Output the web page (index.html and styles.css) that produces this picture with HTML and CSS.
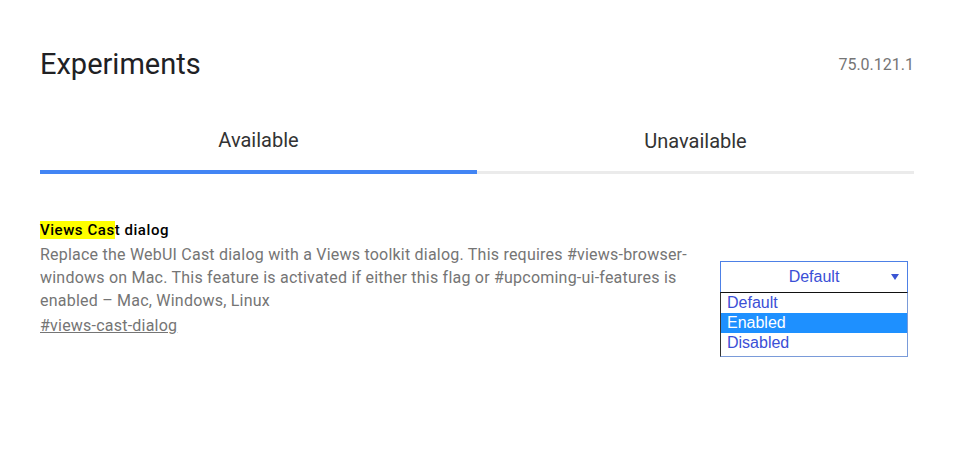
FILE: index.html
```html
<!DOCTYPE html>
<html>
<head>
<meta charset="utf-8">
<link rel="stylesheet" href="styles.css">
</head>
<body>
<div class="page">
  <header class="header">
    <h1 class="title">Experiments</h1>
    <span class="version">75.0.121.1</span>
  </header>
  <nav class="tabs">
    <div class="tab tab-active">Available</div>
    <div class="tab">Unavailable</div>
  </nav>
  <section class="experiment">
    <div class="exp-text">
      <h3 class="exp-name"><mark class="hl">Views Cas</mark>t dialog</h3>
      <p class="exp-desc">Replace the WebUI Cast dialog with a Views toolkit dialog. This requires #views-browser-windows on Mac. This feature is activated if either this flag or #upcoming-ui-features is enabled – Mac, Windows, Linux</p>
      <a class="exp-link">#views-cast-dialog</a>
    </div>
    <div class="exp-control">
      <div class="select">
        <span class="select-value">Default</span>
        <svg class="select-arrow" width="8" height="6" viewBox="0 0 8 6"><path d="M0 0H8L4 6Z" fill="#3b55d4"/></svg>
      </div>
      <ul class="options">
        <li class="option">Default</li>
        <li class="option option-selected">Enabled</li>
        <li class="option">Disabled</li>
      </ul>
    </div>
  </section>
</div>
</body>
</html>
```

FILE: styles.css
```css
html, body {
  margin: 0;
  padding: 0;
  background: #fff;
}
body {
  font-family: Roboto, "Liberation Sans", sans-serif;
}
.page {
  width: 874px;
  padding: 0 0 0 40px;
}
.header {
  display: flex;
  justify-content: space-between;
  align-items: flex-start;
  padding-top: 46px;
  height: 50px;
}
.title {
  margin: 0;
  font-size: 29px;
  font-weight: 400;
  color: #202124;
  line-height: 36px;
}
.version {
  margin-top: 9px;
  font-size: 16px;
  line-height: 20px;
  color: #757575;
}
.tabs {
  display: flex;
  align-items: flex-end;
  margin-top: 32px;
}
.tab {
  flex: 1;
  text-align: center;
  font-size: 20px;
  color: #333;
  line-height: 24px;
  padding-bottom: 18px;
  border-bottom: 3px solid #ebebeb;
}
.tab-active {
  border-bottom: 4px solid #4285f4;
}
.experiment {
  display: flex;
  margin-top: 47px;
}
.exp-text {
  width: 665px;
}
.exp-name {
  margin: 0;
  font-size: 15px;
  letter-spacing: 0.55px;
  font-weight: 500;
  color: #000;
  line-height: 18px;
}
.hl {
  background: #ffff00;
  color: #000;
}
.exp-desc {
  margin: 4px 0 0;
  font-size: 16px;
  letter-spacing: 0.22px;
  line-height: 23px;
  color: #757575;
}
.exp-link {
  display: inline-block;
  margin-top: 4px;
  font-size: 16px;
  letter-spacing: 0.22px;
  color: #757575;
  text-decoration: underline;
}
.exp-control {
  margin-left: 15px;
  margin-top: 40px;
  width: 188px;
}
.select {
  position: relative;
  box-sizing: border-box;
  height: 31px;
  border: 1px solid #4d80e6;
  border-bottom: none;
  display: flex;
  align-items: center;
  justify-content: center;
  font-family: "Liberation Sans", Arial, sans-serif;
  font-size: 16px;
  color: #3b4fd6;
}
.select-arrow {
  position: absolute;
  right: 8px;
  top: 12px;
}
.options {
  list-style: none;
  margin: 0;
  padding: 0 0 3px;
  box-sizing: border-box;
  border: 1px solid #7a9bd9;
  border-top: 1px solid #111;
  border-left: 1px solid #333;
  font-family: "Liberation Sans", Arial, sans-serif;
  font-size: 16px;
  color: #3b4fd6;
}
.option {
  height: 20px;
  line-height: 20px;
  padding-left: 6px;
}
.option-selected {
  background: #1e90ff;
  color: #fff;
}
```
